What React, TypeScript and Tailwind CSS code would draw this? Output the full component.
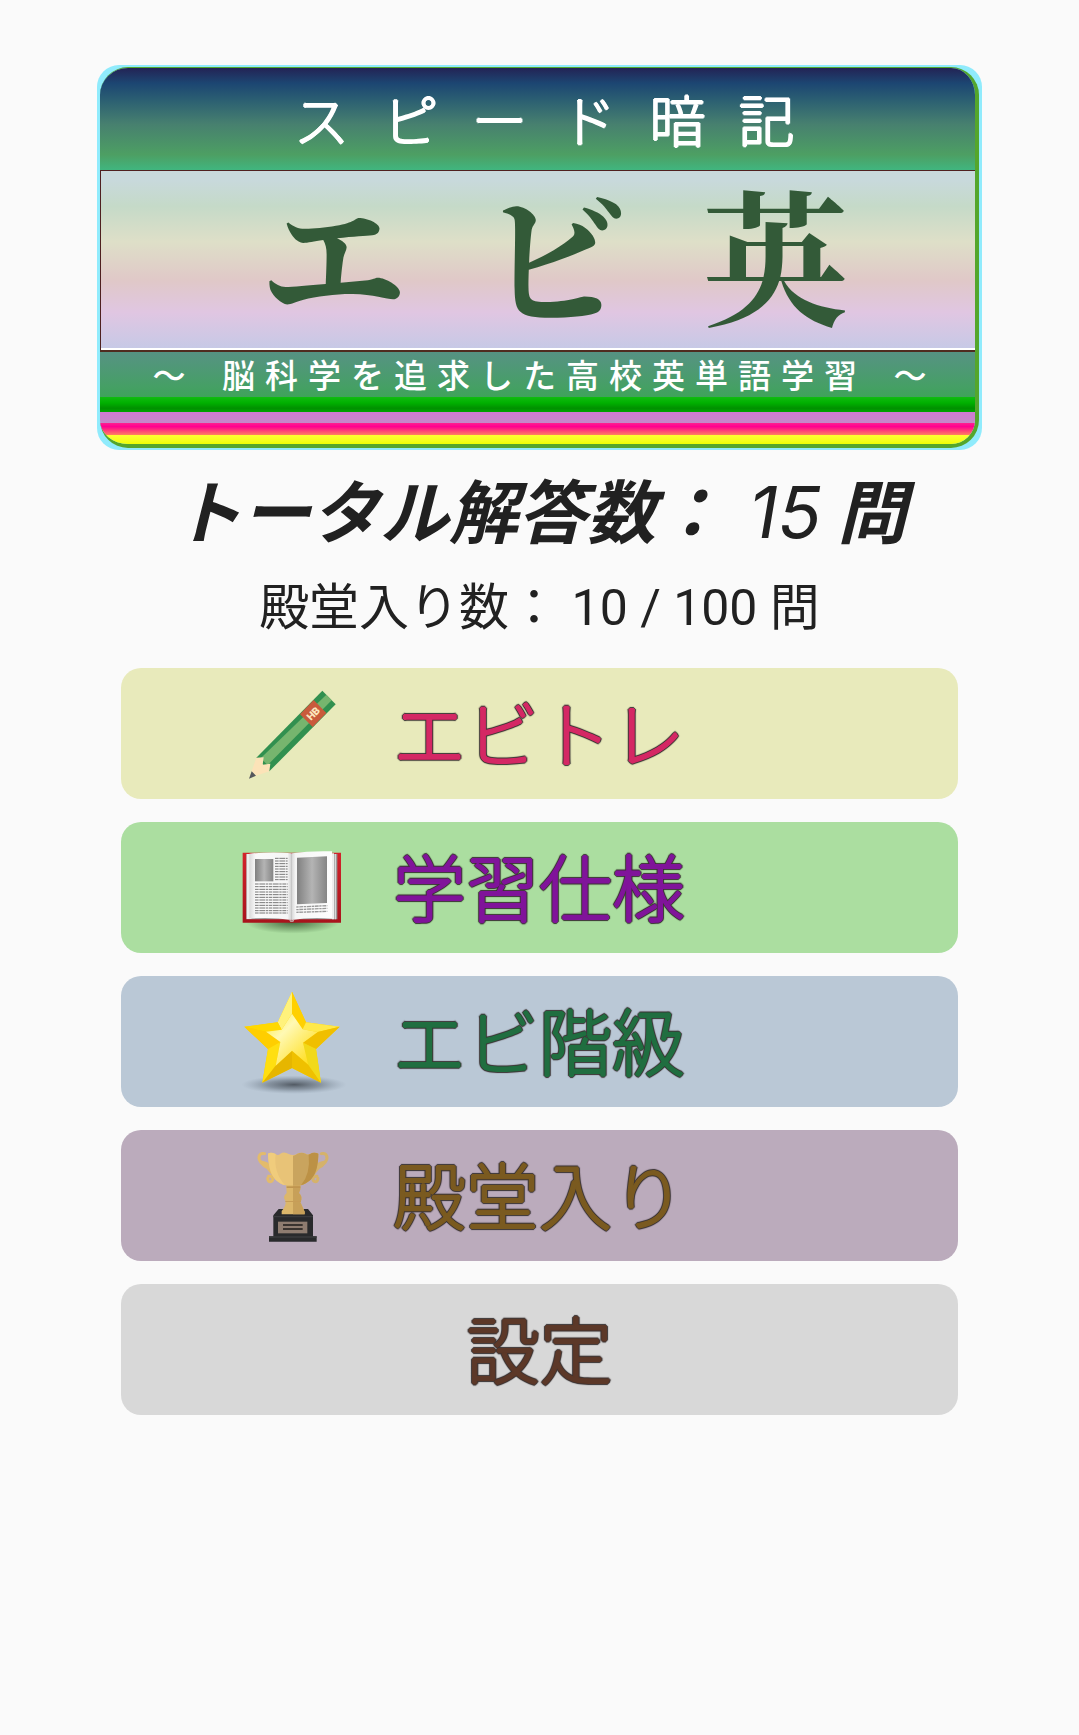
import React from 'react';

interface MenuItem {
  label: string;
  icon?: React.ReactNode;
  background: string;
  text: string;
}

const PencilIcon: React.FC = () => (
  <svg viewBox="0 7 390 360" className="h-[120px] w-[130px] shrink-0" aria-hidden="true">
    <path d="M277 57 L317 98 L118 299 L79 258 Z" fill="#31904f" />
    <path d="M289 69 L305 86 L113 280 L92 260 Z" fill="#76b56e" />
    <path d="M251 85 L289 124 L248 166 L210 128 Z" fill="#c95a3c" />
    <path d="M79 258 L101 257 L98 279 L121 276 L118 299 L78 312 L65 299 Z" fill="#fce3b8" />
    <path d="M65 299 L78 312 L57 321 Z" fill="#55575b" />
    <text
      x="250"
      y="126"
      transform="rotate(-45 250 126)"
      textAnchor="middle"
      dominantBaseline="central"
      fontFamily="Roboto, sans-serif"
      fontSize="31"
      fontWeight="900"
      fill="#fbe6bd"
    >
      HB
    </text>
  </svg>
);

const textRows = [158, 166, 174, 182, 190, 198, 206, 214, 222, 230, 238, 245];
const sideRows = [81, 89, 97, 105, 113, 121, 129, 137, 145];

const BookIcon: React.FC = () => (
  <svg viewBox="0 -10 390 360" className="h-[120px] w-[130px] shrink-0" aria-hidden="true">
    <defs>
      <radialGradient id="bookShadow">
        <stop offset="0" stopColor="#35582f" stopOpacity="0.85" />
        <stop offset="1" stopColor="#35582f" stopOpacity="0" />
      </radialGradient>
      <linearGradient id="bookPicture">
        <stop offset="0" stopColor="#808080" />
        <stop offset="0.5" stopColor="#b4b4b4" />
        <stop offset="1" stopColor="#858585" />
      </linearGradient>
      <linearGradient id="bookCover" x2="0" y2="1">
        <stop offset="0" stopColor="#d3232b" />
        <stop offset="1" stopColor="#a8141c" />
      </linearGradient>
      <linearGradient id="leftPage">
        <stop offset="0" stopColor="#d9d9d9" />
        <stop offset="0.15" stopColor="#fafafa" />
        <stop offset="0.9" stopColor="#f6f6f6" />
        <stop offset="1" stopColor="#cfcfcf" />
      </linearGradient>
      <linearGradient id="rightPage">
        <stop offset="0" stopColor="#d6d6d6" />
        <stop offset="0.1" stopColor="#f6f6f6" />
        <stop offset="1" stopColor="#fdfdfd" />
      </linearGradient>
    </defs>
    <ellipse cx="188" cy="273" rx="140" ry="34" fill="url(#bookShadow)" />
    <path d="M38 64 H333 V274 H38 Z" fill="url(#bookCover)" />
    <path d="M49 68 H322 V264 H49 Z" fill="#9c9c9c" />
    <path d="M50 68 H64 V263 H50 Z" fill="#eeeeee" />
    <path d="M306 66 H312 V264 H306 Z" fill="#efefef" />
    <path d="M314 68 H318 V264 H314 Z" fill="#d9d9d9" />
    <path d="M58 67 Q130 60 185 66 V266 Q120 256 58 262 Z" fill="url(#leftPage)" />
    <path d="M185 66 Q240 58 306 60 V262 Q240 257 185 266 Z" fill="url(#rightPage)" />
    <path d="M75 83 H130 V150 H75 Z" fill="url(#bookPicture)" />
    <path d="M201 79 L291 75 V215 L201 219 Z" fill="url(#bookPicture)" />
    <g stroke="#777777" strokeWidth="3" strokeDasharray="11 2 17 2 7 2">
      {textRows.map((y) => (
        <path key={y} d={`M75 ${y} H173`} />
      ))}
      {sideRows.map((y) => (
        <path key={y} d={`M135 ${y} H173`} />
      ))}
    </g>
    <g stroke="#999999" strokeWidth="4" strokeDasharray="7 2 12 2">
      <path d="M199 227 L292 223" />
      <path d="M199 235 L292 231" />
      <path d="M199 243 L292 240" />
    </g>
    <path d="M176 263 Q185 272 194 263 L190 271 H181 Z" fill="#c4c4c4" />
  </svg>
);

const StarIcon: React.FC = () => (
  <svg viewBox="0 1 390 360" className="h-[120px] w-[130px] shrink-0" aria-hidden="true">
    <defs>
      <radialGradient id="starShadow">
        <stop offset="0" stopColor="#4c545d" stopOpacity="0.95" />
        <stop offset="0.5" stopColor="#66717d" stopOpacity="0.6" />
        <stop offset="1" stopColor="#8695a5" stopOpacity="0" />
      </radialGradient>
      <linearGradient id="starFace" x2="1" y2="1">
        <stop offset="0" stopColor="#ffed3a" />
        <stop offset="0.35" stopColor="#fff9b4" />
        <stop offset="1" stopColor="#ffd800" />
      </linearGradient>
    </defs>
    <ellipse cx="192" cy="309" rx="158" ry="28" fill="url(#starShadow)" />
    <path d="M186 30 L228 122 L329 135 L258 202 L273 303 L186 259 L97 303 L114 202 L43 135 L143 122 Z" fill="#fbcf00" />
    <path d="M186 30 L143 122 L155 144 L186 96 Z" fill="#fff27c" />
    <path d="M186 30 L228 122 L218 143 L186 96 Z" fill="#ffd000" />
    <path d="M143 122 L43 135 L108 150 L155 144 Z" fill="#ffd900" />
    <path d="M43 135 L114 202 L151 181 L108 150 Z" fill="#ffce00" />
    <path d="M228 122 L329 135 L263 151 L218 143 Z" fill="#ffe94a" />
    <path d="M329 135 L258 202 L219 183 L263 151 Z" fill="#f0bf00" />
    <path d="M114 202 L97 303 L137 252 L151 181 Z" fill="#ffdf10" />
    <path d="M97 303 L186 259 V207 L137 252 Z" fill="#e6b600" />
    <path d="M186 259 L273 303 L235 249 L186 207 Z" fill="#efc000" />
    <path d="M258 202 L273 303 L235 249 L219 183 Z" fill="#f1d91a" />
    <path d="M186 96 L218 143 L263 151 L219 183 L235 249 L186 207 L137 252 L151 181 L108 150 L155 144 Z" fill="url(#starFace)" />
  </svg>
);

const TrophyIcon: React.FC = () => (
  <svg viewBox="0 13 390 360" className="h-[120px] w-[130px] shrink-0" aria-hidden="true">
    <g fill="none" strokeWidth="9" strokeLinecap="round" strokeLinejoin="round">
      <path d="M104 66 C88 62 82 78 92 91 Q101 103 114 109 L132 132 M96 92 Q112 94 120 107 M113 140 C113 154 130 153 128 140 Q126 132 116 134" stroke="#e3bb6b" />
      <path d="M274 66 C290 62 296 78 286 91 Q277 103 264 109 L246 132 M282 92 Q266 94 258 107 M264 140 C264 154 247 153 249 140 Q251 132 261 134" stroke="#d5b26a" />
    </g>
    <path d="M146 232 H234 L249 251 V314 H260 V330 H117 V314 H130 V251 Z" fill="#292a2c" />
    <path d="M130 253 H249 V257 H130 Z" fill="#3a3b3d" />
    <path d="M117 314 H260 V318 H117 Z" fill="#3a3b3d" />
    <path d="M144 270 H232 V305 H144 Z" fill="#8e7c70" />
    <path d="M159 280 H218 M159 292 H218" stroke="#39332f" strokeWidth="6" />
    <path d="M168 155 H211 V173 L207 184 Q220 196 211 211 L224 240 V248 H155 V238 Q168 224 167 209 Q156 195 170 184 Z" fill="#dcb76b" />
    <path d="M189 155 H211 V173 L207 184 Q220 196 211 211 L224 240 V248 H189 Z" fill="#c7a059" />
    <path d="M166 208 H213 V211 H166 Z" fill="#c79d57" />
    <path d="M170 164 H211 V169 H170 Z" fill="#c0954f" />
    <path d="M114 66 Q122 60 137 67 Q144 73 151 66 Q163 58 176 67 Q190 74 202 66 Q215 60 227 66 Q236 72 246 64 Q257 62 265 66 C264 118 252 148 213 161 H165 C127 148 116 118 114 66 Z" fill="#e8c377" />
    <path d="M189 72 Q197 70 202 66 Q215 60 227 66 Q236 72 246 64 Q257 62 265 66 C264 118 252 148 213 161 H189 Z" fill="#c9a45e" />
    <path d="M114 66 Q122 60 137 67 Q130 122 165 161 C127 148 116 118 114 66 Z" fill="#f0cc7c" />
    <path d="M236 69 L246 64 Q257 62 265 66 C264 118 252 148 213 161 Q242 126 236 69 Z" fill="#bc9145" />
  </svg>
);

const menuItems: MenuItem[] = [
  { label: 'エビトレ', icon: <PencilIcon />, background: 'bg-[#e8eabb]', text: 'text-[#d42864]' },
  { label: '学習仕様', icon: <BookIcon />, background: 'bg-[#abdea0]', text: 'text-[#80149a]' },
  { label: 'エビ階級', icon: <StarIcon />, background: 'bg-[#bac8d6]', text: 'text-[#206e40]' },
  { label: '殿堂入り', icon: <TrophyIcon />, background: 'bg-[#bbabbc]', text: 'text-[#7a5a20]' },
  { label: '設定', background: 'bg-[#d8d8d8]', text: 'text-[#5c3828]' },
];

// thickens the thin strokes and rounds their ends
const softText =
  '[text-shadow:1px_0_currentColor,-1px_0_currentColor,0_1px_currentColor,0_-1px_currentColor]';

// same, with a dark outline behind
const outlinedText =
  '[text-shadow:1px_0_currentColor,-1px_0_currentColor,0_1px_currentColor,0_-1px_currentColor,2px_0_1px_#3a3333,-2px_0_1px_#3a3333,0_2px_1px_#3a3333,0_-2px_1px_#3a3333,1px_1px_1px_#3a3333,-1px_1px_1px_#3a3333,1px_-1px_1px_#3a3333,-1px_-1px_1px_#3a3333]';

const TitleCard: React.FC = () => (
  <header className="rounded-[22px] bg-[#90ebfc] py-[2px] pr-[3px] pl-[3px] text-center">
    <div className="overflow-hidden rounded-[28px] border-t border-r-4 border-b-4 border-[#54a62c]">
      <p
        className={`h-[102px] bg-[linear-gradient(#232355,#1c4672_15%,#2c6072_32%,#47806f_55%,#4d9f63_85%,#40b67f)] pl-[46px] text-[56px] leading-[100px] font-light tracking-[33px] text-white ${softText}`}
      >
        スピード暗記
      </p>
      <div className="border-t border-l border-[#4f2020] bg-white pb-[2px]">
        <h1 className="h-[177px] bg-[linear-gradient(#c8d9dc_5%,#c5dac8_20%,#dedfc8_40%,#e0c8c8_62%,#e0c6e2_80%,#c7c9e6)] pl-[108px] font-['Noto_Serif_CJK_JP','Noto_Sans_CJK_JP',serif] text-[146px] leading-[160px] font-bold tracking-[75px] text-[#335a38]">
          エビ英
        </h1>
      </div>
      <p className="h-[47px] border-t-2 border-[#4f2b20] bg-linear-to-b from-[#569283] to-[#3fa35a] pl-[14px] text-[33px] leading-[44px] font-medium tracking-[10px] whitespace-nowrap text-white">
        ～&ensp;脳科学を追求した高校英単語学習&ensp;～
      </p>
      <div className="h-[15px] bg-[linear-gradient(#10bc10,#00b000_40%,#009000_75%,#00a400)]" />
      <div className="h-[11px] bg-linear-to-b from-[#d07ad2] to-[#c488c8]" />
      <div className="h-[12px] bg-[linear-gradient(#ff2090,#ff0090_30%,#ff8060)]" />
      <div className="h-[9px] bg-linear-to-b from-[#ffff30] to-[#eeff00]" />
    </div>
  </header>
);

const App: React.FC = () => {
  return (
    <div className="min-h-screen bg-[#fafafa] px-[9%] pt-[65px] pb-16 font-['Noto_Sans_CJK_JP',sans-serif] text-[#212121]">
      <TitleCard />

      <main className="px-6 text-center">
        <p className="mt-2.5 text-[69px] leading-[96px] font-bold whitespace-nowrap italic">
          トータル解答数：{' '}
          <span className="ml-2 font-['Inter',sans-serif] text-[72px] font-normal">15</span> 問
        </p>
        <p className="mt-4 font-['Roboto','Noto_Sans_CJK_JP',sans-serif] text-[50px] leading-[64px]">
          殿堂入り数： 10 / 100 問
        </p>

        <nav className="mt-7 flex flex-col gap-[23px]">
          {menuItems.map((item) => (
            <button
              key={item.label}
              type="button"
              className={`flex h-[131px] w-full items-center rounded-[20px] ${item.background} ${
                item.icon ? 'gap-[33px] pl-[109px]' : 'justify-center'
              }`}
            >
              {item.icon}
              <span
                className={`pb-2 text-[73px] leading-[100px] font-light whitespace-nowrap ${outlinedText} ${item.text}`}
              >
                {item.label}
              </span>
            </button>
          ))}
        </nav>
      </main>
    </div>
  );
};

export default App;
